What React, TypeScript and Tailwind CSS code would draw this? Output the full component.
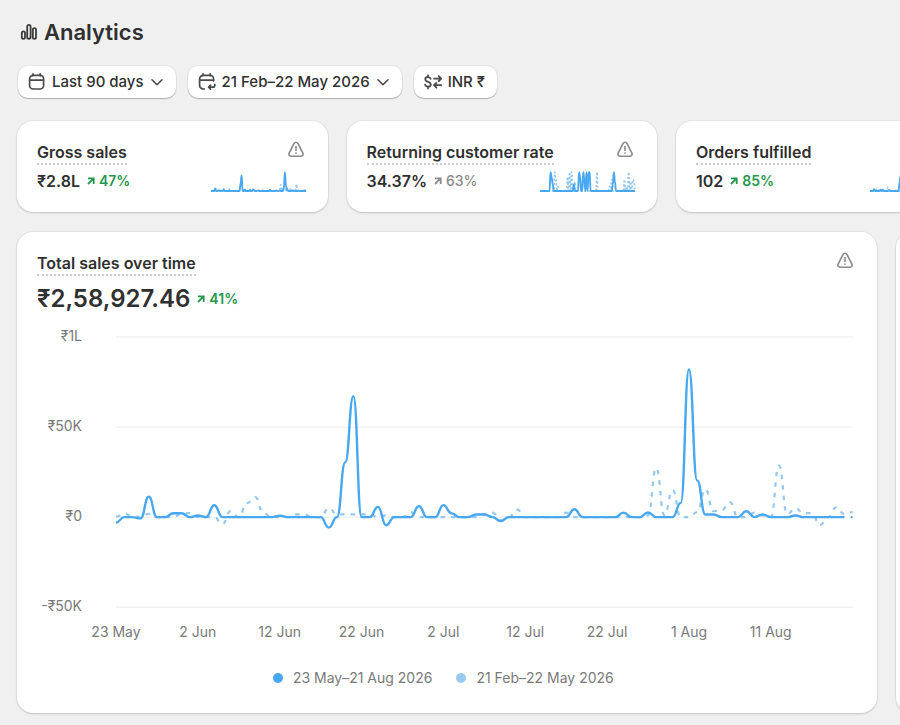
import type { ReactNode } from "react";

type Trend = "up" | "neutral";

type Metric = {
  title: string;
  value: string;
  change: string;
  trend: Trend;
  current: number[];
  previous: number[];
};

const DAYS = 91;
const CHART_WIDTH = 736;
const CHART_HEIGHT = 270;

const yTicks = ["₹1L", "₹50K", "₹0", "-₹50K"];
const xTicks = ["23 May", "2 Jun", "12 Jun", "22 Jun", "2 Jul", "12 Jul", "22 Jul", "1 Aug", "11 Aug"];

// Only days with movement are listed, everything else is zero
function fillDays(sparse: Record<number, number>) {
  return Array.from({ length: DAYS }, (_, day) => sparse[day] ?? 0);
}

// Sales per day, in thousands of rupees
const currentSales = fillDays({
  0: -3, 3: -0.7, 4: 11.4, 7: 2.2, 8: 2.2, 10: 0.9, 12: 6.6, 20: 0.8, 26: -5.8, 28: 30.4, 29: 67.2,
  32: 5.7, 33: -4.5, 37: 6.1, 40: 6.7, 41: 2.1, 44: 1.5, 45: 1.5, 47: -2.2, 56: 4.4, 62: 2.5, 65: 2.6,
  69: 7.9, 70: 82, 71: 20.4, 72: 1.5, 73: 1.5, 77: 3.3, 79: 1.5, 83: 0.9,
});

const previousSales = fillDays({
  0: 0.3, 1: 2, 2: 0.6, 4: 1.9, 8: 1.9, 9: 2.2, 13: -3.9, 14: 3.3, 16: 7.8, 17: 11.1, 18: 2.4,
  22: 1.5, 23: 1.5, 26: 5, 27: 1.5, 28: 1.5, 29: 1.5, 30: 1.5, 31: 1.7, 33: 1, 36: 2.8, 45: 1.7,
  46: 2.5, 47: -1.7, 49: 4.2, 55: 2.5, 65: 1, 66: 27.2, 67: 1.1, 68: 15, 71: 2.8, 72: 15.5, 73: 3.3,
  74: 3.9, 75: 8.3, 78: 2.5, 79: 1, 81: 28.6, 82: 1.7, 83: 5, 84: 2.2, 85: 2.2, 86: -4.4, 88: 5.5,
  89: 1.7, 90: 2.8,
});

const currentReturning = fillDays({
  10: 82, 11: 60, 12: 30, 32: 28, 37: 82, 38: 60, 41: 82, 42: 50, 44: 82, 46: 82, 47: 82, 69: 30,
  70: 82, 71: 40,
});

const previousReturning = fillDays({
  14: 82, 15: 50, 17: 20, 26: 60, 28: 82, 30: 82, 33: 40, 54: 82, 66: 20, 68: 50, 80: 50, 82: 20,
  84: 82, 86: 40, 88: 50, 89: 40,
});

const currentOrders = fillDays({ 4: 8, 10: 5, 12: 6, 18: 3, 28: 35, 29: 67, 40: 8, 56: 6, 70: 82 });
const previousOrders = fillDays({ 2: 8, 6: 6, 9: 8, 16: 8, 17: 16, 18: 8, 24: 6, 66: 30, 81: 26 });

const metrics: Metric[] = [
  {
    title: "Gross sales",
    value: "₹2.8L",
    change: "47%",
    trend: "up",
    current: currentSales,
    previous: previousSales,
  },
  {
    title: "Returning customer rate",
    value: "34.37%",
    change: "63%",
    trend: "neutral",
    current: currentReturning,
    previous: previousReturning,
  },
  {
    title: "Orders fulfilled",
    value: "102",
    change: "85%",
    trend: "up",
    current: currentOrders,
    previous: previousOrders,
  },
];

// Every day is reached with a flat tangent, which gives the rounded bumps
function smoothPath(values: number[], step: number, toY: (v: number) => number) {
  let d = `M0 ${toY(values[0]).toFixed(2)}`;
  for (let i = 1; i < values.length; i++) {
    const x = (i * step).toFixed(2);
    const mid = ((i - 0.5) * step).toFixed(2);
    const from = toY(values[i - 1]).toFixed(2);
    const to = toY(values[i]).toFixed(2);
    d += `C${mid} ${from} ${mid} ${to} ${x} ${to}`;
  }
  return d;
}

function AnalyticsIcon() {
  return (
    <svg width="18" height="18" viewBox="0 0 18 18" fill="none" stroke="#3c3c3c" strokeWidth="1.8" aria-hidden="true">
      <rect x="1.8" y="8.4" width="3.2" height="7.4" rx="1.6" />
      <rect x="7.2" y="1.9" width="3.4" height="13.9" rx="1.7" />
      <rect x="12.8" y="5.2" width="3.2" height="10.6" rx="1.6" />
    </svg>
  );
}

function CalendarIcon() {
  return (
    <svg width="18" height="18" viewBox="0 0 18 18" fill="none" stroke="#4a4a4a" strokeWidth="1.7" strokeLinecap="round" aria-hidden="true">
      <rect x="1.6" y="2.4" width="14" height="13.6" rx="3.6" />
      <path d="M1.9 7.2h13.4M5 0.9v1.7M12.2 0.9v1.7" />
    </svg>
  );
}

function CalendarCompareIcon() {
  return (
    <svg width="18" height="18" viewBox="0 0 18 18" fill="none" stroke="#4a4a4a" strokeWidth="1.7" strokeLinecap="round" strokeLinejoin="round" aria-hidden="true">
      <path d="M6.2 16H5.2a3.6 3.6 0 0 1-3.6-3.6V6a3.6 3.6 0 0 1 3.6-3.6H12A3.6 3.6 0 0 1 15.6 6v2" />
      <path d="M1.9 7.2h13.4M5 0.9v1.7M12.2 0.9v1.7" />
      <path d="M16.8 11.4v.8a2 2 0 0 1-2 2h-4M12.6 12.2l-2 2 2 2" />
    </svg>
  );
}

function CurrencyIcon() {
  return (
    <svg width="18" height="18" viewBox="0 0 18 18" fill="none" stroke="#4a4a4a" strokeWidth="1.8" strokeLinecap="round" strokeLinejoin="round" aria-hidden="true">
      <path d="M6.6 5.9C6.3 4.7 5.3 4 4 4 2.4 4 1.3 4.9 1.3 6.2c0 3.2 5.5 2 5.5 5.2 0 1.4-1.1 2.2-2.7 2.2s-2.7-.8-3-2M4 2.2v1.6M4 13.8v1.6" />
      <path d="M10 5.6h7M14.8 3.2l2.4 2.4L14.8 8M17.2 12.2h-7M12.4 9.8L10 12.2l2.4 2.4" />
    </svg>
  );
}

function ChevronIcon() {
  return (
    <svg width="14" height="14" viewBox="0 0 14 14" fill="none" stroke="#4a4a4a" strokeWidth="1.6" strokeLinecap="round" strokeLinejoin="round" aria-hidden="true">
      <path d="M2 4.8l5 4.9 5-4.9" />
    </svg>
  );
}

function WarningIcon() {
  return (
    <svg className="shrink-0" width="18" height="18" viewBox="0 0 18 18" fill="none" stroke="#8a8a8a" strokeWidth="1.6" strokeLinecap="round" strokeLinejoin="round" role="img" aria-label="Warning">
      <path d="M7.1 2.4 2.1 12.1c-.8 1.5.2 3.1 1.8 3.1h10.2c1.6 0 2.6-1.6 1.8-3.1l-5-9.7c-.8-1.5-3-1.5-3.8 0Z" />
      <path d="M9 5.6v3.8" />
      <circle cx="9" cy="12.1" r="0.9" fill="#8a8a8a" stroke="none" />
    </svg>
  );
}

function FilterButton({ icon, label, menu }: { icon: ReactNode; label: string; menu?: boolean }) {
  return (
    <button
      type="button"
      className="flex h-8 items-center gap-[6px] rounded-[10px] bg-white pr-3 pl-[10px] text-[15px] font-medium text-[#303030] shadow-[0_1px_1px_#b0b0b0,0_0_0_1px_#e6e6e6]"
    >
      {icon}
      <span>{label}</span>
      {menu && <ChevronIcon />}
    </button>
  );
}

function Change({ value, trend }: { value: string; trend: Trend }) {
  return (
    <span
      className={`flex items-center gap-1 text-sm ${
        trend === "up" ? "font-semibold text-[#24984d]" : "font-medium text-[#8a8a8a]"
      }`}
    >
      <svg width="8" height="8" viewBox="0 0 8 8" fill="none" stroke="currentColor" strokeWidth="1.8" aria-hidden="true">
        <path d="M1 7l5.6-5.6M1 1.3h5.7V7" />
      </svg>
      {value}
    </span>
  );
}

function CardTitle({ children }: { children: ReactNode }) {
  return (
    <h2 className="border-b-2 border-dotted border-[#cccccc] text-base leading-[22px] font-semibold whitespace-nowrap text-[#303030]">
      {children}
    </h2>
  );
}

function Card({ className, children }: { className?: string; children?: ReactNode }) {
  return (
    <section className={`rounded-2xl bg-white shadow-[0_1px_2px_#c4c4c4,0_0_0_1px_#e6e6e6] ${className ?? ""}`}>
      {children}
    </section>
  );
}

function Sparkline({ current, previous }: { current: number[]; previous: number[] }) {
  const step = 95 / (DAYS - 1);
  const toY = (v: number) => 20 - Math.max(v, 0) * 0.23;
  return (
    <svg className="overflow-visible" width="95" height="22" viewBox="0 0 95 22" fill="none" aria-hidden="true">
      <path d={smoothPath(previous, step, toY)} stroke="#8ec5ee" strokeWidth="1.6" strokeDasharray="2 2" />
      <path d={smoothPath(current, step, toY)} stroke="#47a7f0" strokeWidth="1.9" strokeLinejoin="round" />
    </svg>
  );
}

function MetricCard({ metric }: { metric: Metric }) {
  return (
    <Card className="px-5 pt-5 pb-[19px]">
      <div className="flex items-start justify-between pr-[3px]">
        <CardTitle>{metric.title}</CardTitle>
        <WarningIcon />
      </div>
      <div className="mt-1 flex items-end justify-between pr-[2px]">
        <div className="flex items-center gap-[7px]">
          <span className="text-base leading-6 font-semibold text-[#303030]">{metric.value}</span>
          <Change value={metric.change} trend={metric.trend} />
        </div>
        <Sparkline current={metric.current} previous={metric.previous} />
      </div>
    </Card>
  );
}

function SalesChart() {
  const step = CHART_WIDTH / (DAYS - 1);
  const toY = (v: number) => 180 - v * 1.8;
  return (
    <div className="mt-[23px] flex gap-[34px] pr-[4px]">
      <div className="-mt-[11px] -mb-[9px] flex w-[45px] shrink-0 flex-col items-end justify-between self-stretch text-sm leading-5 whitespace-nowrap text-[#7a7a7a]">
        {yTicks.map((tick) => (
          <span key={tick}>{tick}</span>
        ))}
      </div>
      <svg
        className="block min-w-0 flex-1 overflow-visible"
        viewBox={`0 0 ${CHART_WIDTH} ${CHART_HEIGHT}`}
        fill="none"
        role="img"
        aria-label="Total sales over time"
      >
        {yTicks.map((tick, i) => (
          <path key={tick} d={`M0 ${i * 90}h${CHART_WIDTH}`} stroke="#f1f1f1" strokeWidth="1.3" />
        ))}
        <path
          d={smoothPath(previousSales, step, toY)}
          stroke="#94c8ef"
          strokeWidth="2.2"
          strokeDasharray="4.5 6"
        />
        <path
          d={smoothPath(currentSales.slice(0, 90), step, toY)}
          stroke="#47a7f0"
          strokeWidth="2.4"
          strokeLinejoin="round"
        />
        <circle cx={CHART_WIDTH - 1} cy={180} r="1.1" fill="#47a7f0" />
      </svg>
    </div>
  );
}

function LegendItem({ label, dot }: { label: string; dot: string }) {
  return (
    <li className="flex items-center gap-[10px]">
      <span className={`size-[10px] rounded-full ${dot}`} />
      {label}
    </li>
  );
}

export default function App() {
  return (
    <main className="min-h-screen overflow-hidden bg-[#f0f0f0] font-['Inter',sans-serif]">
      <div className="min-w-[1333px] px-[17px] pt-[18px] pb-3">
        {/* Header */}
        <header className="flex items-center gap-[6px] pl-[3px]">
          <AnalyticsIcon />
          <h1 className="text-[22px] leading-7 font-semibold text-[#303030]">Analytics</h1>
        </header>

        {/* Filters */}
        <div className="mt-5 flex gap-3 pl-[1px]">
          <FilterButton icon={<CalendarIcon />} label="Last 90 days" menu />
          <FilterButton icon={<CalendarCompareIcon />} label="21 Feb–22 May 2026" menu />
          <FilterButton icon={<CurrencyIcon />} label="INR ₹" />
        </div>

        {/* Metrics */}
        <div className="mt-[23px] grid grid-cols-4 gap-[19px]">
          {metrics.map((metric) => (
            <MetricCard key={metric.title} metric={metric} />
          ))}
        </div>

        {/* Total sales */}
        <div className="mt-5 grid grid-cols-3 gap-[19px]">
          <Card className="col-span-2 px-5 pt-5 pb-[25px]">
            <div className="flex items-start justify-between pr-[3px]">
              <CardTitle>Total sales over time</CardTitle>
              <WarningIcon />
            </div>
            <div className="mt-2 flex items-center gap-[7px]">
              <span className="text-2xl leading-[30px] font-semibold text-[#303030]">₹2,58,927.46</span>
              <Change value="41%" trend="up" />
            </div>
            <SalesChart />
            <div className="mt-[15px] mr-[4px] ml-[79px] grid grid-cols-9 text-sm leading-5 text-[#7a7a7a]">
              {xTicks.map((tick) => (
                <span key={tick} className="-translate-x-1/2 text-center">
                  {tick}
                </span>
              ))}
            </div>
            <ul className="mt-[26px] flex justify-center gap-6 pr-[7px] text-sm leading-5 text-[#7a7a7a]">
              <LegendItem label="23 May–21 Aug 2026" dot="bg-[#47a7f0]" />
              <LegendItem label="21 Feb–22 May 2026" dot="bg-[#9bcaf0]" />
            </ul>
          </Card>
          <Card />
        </div>
      </div>
    </main>
  );
}
